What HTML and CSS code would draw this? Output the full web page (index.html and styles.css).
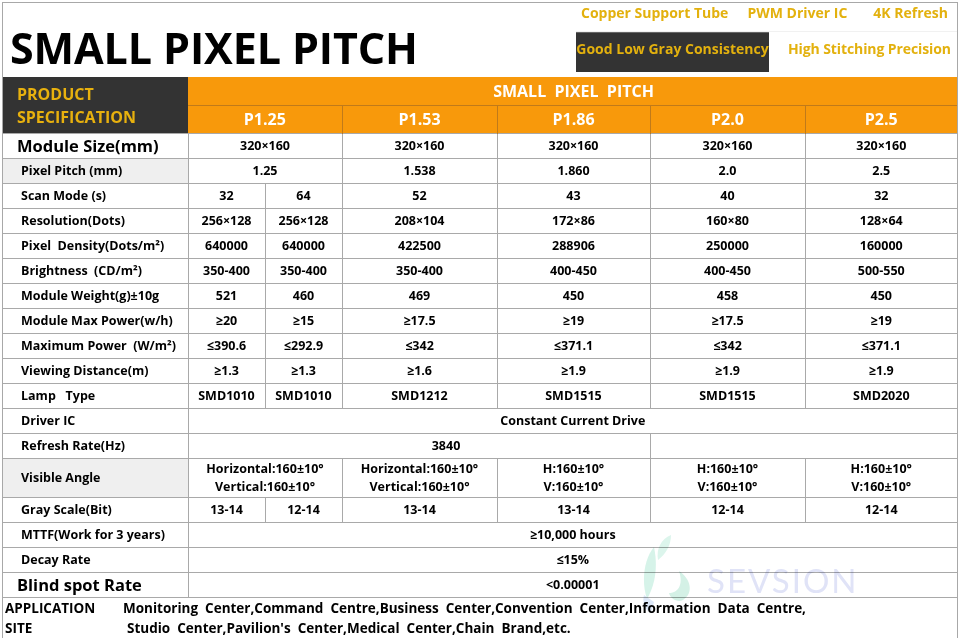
FILE: index.html
```html
<!DOCTYPE html>
<html lang="en">
<head>
<meta charset="utf-8">
<title>Small Pixel Pitch</title>
<link rel="stylesheet" href="styles.css">
</head>
<body>
<div class="page">
  <header class="top">
    <h1 class="title">SMALL PIXEL PITCH</h1>
    <div class="features">
      <div class="feat-row r1">
        <span class="f-copper">Copper Support Tube</span>
        <span class="f-pwm">PWM Driver IC</span>
        <span class="f-4k">4K Refresh</span>
      </div>
      <div class="feat-row r2">
        <span class="boxed">Good Low Gray Consistency</span>
        <span class="f-high">High Stitching Precision</span>
      </div>
    </div>
  </header>

  <table class="spec">
    <colgroup>
      <col class="c-lbl"><col class="c-a"><col class="c-a"><col class="c-2"><col class="c-3"><col class="c-4"><col class="c-5">
    </colgroup>
    <thead>
      <tr class="h1">
        <th rowspan="2" class="corner">PRODUCT<br>SPECIFICATION</th>
        <th colspan="6" class="series">SMALL&nbsp;&nbsp;PIXEL&nbsp;&nbsp;PITCH</th>
      </tr>
      <tr class="h2">
        <th colspan="2" class="first">P1.25</th><th>P1.53</th><th>P1.86</th><th>P2.0</th><th>P2.5</th>
      </tr>
    </thead>
    <tbody>
      <tr><td class="lbl big">Module Size(mm)</td><td colspan="2">320×160</td><td>320×160</td><td>320×160</td><td>320×160</td><td>320×160</td></tr>
      <tr><td class="lbl grey">Pixel Pitch (mm)</td><td colspan="2">1.25</td><td>1.538</td><td>1.860</td><td>2.0</td><td>2.5</td></tr>
      <tr><td class="lbl">Scan Mode (s)</td><td>32</td><td>64</td><td>52</td><td>43</td><td>40</td><td>32</td></tr>
      <tr><td class="lbl">Resolution(Dots)</td><td>256×128</td><td>256×128</td><td>208×104</td><td>172×86</td><td>160×80</td><td>128×64</td></tr>
      <tr><td class="lbl">Pixel  Density(Dots/m²)</td><td>640000</td><td>640000</td><td>422500</td><td>288906</td><td>250000</td><td>160000</td></tr>
      <tr><td class="lbl">Brightness  (CD/m²)</td><td>350-400</td><td>350-400</td><td>350-400</td><td>400-450</td><td>400-450</td><td>500-550</td></tr>
      <tr><td class="lbl">Module Weight(g)±10g</td><td>521</td><td>460</td><td>469</td><td>450</td><td>458</td><td>450</td></tr>
      <tr><td class="lbl">Module Max Power(w/h)</td><td>≥20</td><td>≥15</td><td>≥17.5</td><td>≥19</td><td>≥17.5</td><td>≥19</td></tr>
      <tr><td class="lbl">Maximum Power  (W/m²)</td><td>≤390.6</td><td>≤292.9</td><td>≤342</td><td>≤371.1</td><td>≤342</td><td>≤371.1</td></tr>
      <tr><td class="lbl">Viewing Distance(m)</td><td>≥1.3</td><td>≥1.3</td><td>≥1.6</td><td>≥1.9</td><td>≥1.9</td><td>≥1.9</td></tr>
      <tr><td class="lbl">Lamp   Type</td><td>SMD1010</td><td>SMD1010</td><td>SMD1212</td><td>SMD1515</td><td>SMD1515</td><td>SMD2020</td></tr>
      <tr><td class="lbl">Driver IC</td><td colspan="6">Constant Current Drive</td></tr>
      <tr><td class="lbl">Refresh Rate(Hz)</td><td colspan="4" class="refresh">3840</td><td colspan="2"></td></tr>
      <tr class="tall"><td class="lbl grey">Visible Angle</td><td colspan="2">Horizontal:160±10°<br>Vertical:160±10°</td><td>Horizontal:160±10°<br>Vertical:160±10°</td><td>H:160±10°<br>V:160±10°</td><td>H:160±10°<br>V:160±10°</td><td>H:160±10°<br>V:160±10°</td></tr>
      <tr><td class="lbl">Gray Scale(Bit)</td><td>13-14</td><td>12-14</td><td>13-14</td><td>13-14</td><td>12-14</td><td>12-14</td></tr>
      <tr><td class="lbl">MTTF(Work for 3 years)</td><td colspan="6">≥10,000 hours</td></tr>
      <tr><td class="lbl">Decay Rate</td><td colspan="6">≤15%</td></tr>
      <tr class="blind"><td class="lbl big">Blind spot Rate</td><td colspan="6">&lt;0.00001</td></tr>
    </tbody>
  </table>

  <div class="app">
    <div class="app-line"><span class="app-lbl">APPLICATION</span><span class="app-txt">Monitoring  Center,Command  Centre,Business  Center,Convention  Center,Information  Data  Centre,</span></div>
    <div class="app-line"><span class="app-lbl">SITE</span><span class="app-txt second">Studio  Center,Pavilion's  Center,Medical  Center,Chain  Brand,etc.</span></div>
  </div>

  <div class="watermark" aria-hidden="true">
    <svg class="wm-leaf" width="56" height="84" viewBox="0 0 56 84">
      <path d="M15 16 C5 28 2 50 8 68 C14 58 20 40 15 16 Z" fill="#d6f3e9"/>
      <path d="M32 4 C22 8 17 18 19 29 C27 23 32 14 32 4 Z" fill="#dcf5ec"/>
      <path d="M40 40 C52 48 55 62 44 69 C38 72 31 67 30 62 C38 62 45 55 40 40 Z" fill="#d4f1e6"/>
      <path d="M5 64 L15 71 L12 82 C6 79 3 71 5 64 Z" fill="#dde8f8"/>
    </svg>
    <span class="wm-text">SEVSION</span>
  </div>
</div>
</body>
</html>
```

FILE: styles.css
```css
* { box-sizing: border-box; }

body {
  margin: 0;
  background: #ffffff;
  font-family: "Open Sans", "DejaVu Sans", sans-serif;
  color: #000;
}

.page {
  position: relative;
  width: 956px;
  height: 636px;
  margin: 2px 0 0 2px;
  border-left: 1px solid #a8a8a8;
  border-top: 1px solid #a8a8a8;
  border-right: 1px solid #a8a8a8;
  overflow: hidden;
}

/* ---------- top header ---------- */
.top {
  display: flex;
  height: 74px;
}

.title {
  margin: 0;
  padding: 17px 0 0 7px;
  font-size: 43px;
  font-weight: 700;
  line-height: 56px;
  letter-spacing: -0.1px;
  color: #000;
  white-space: nowrap;
}

.features {
  margin-left: auto;
  width: 381px;
  display: flex;
  flex-direction: column;
  color: #e3b10e;
  font-weight: 700;
  font-size: 14px;
  white-space: nowrap;
}

.feat-row { display: flex; }

.r1 {
  height: 29px;
  line-height: 19px;
  border-bottom: 1px solid #f1f1f1;
}
.f-copper { margin-left: 5px; }
.f-pwm { margin-left: 19px; }
.f-4k { margin-left: 26px; }

.r2 {
  height: 40px;
  line-height: 19px;
}
.boxed {
  display: block;
  width: 193px;
  height: 40px;
  padding-top: 6px;
  text-align: center;
  background: #333333;
  border-top: 1px solid #666;
  font-size: 14px;
}
.f-high {
  margin-left: 19px;
  padding-top: 7px;
  letter-spacing: -0.1px;
}

/* ---------- spec table ---------- */
.spec {
  width: 954px;
  border-collapse: collapse;
  table-layout: fixed;
}

.c-lbl { width: 185px; }
.c-a { width: 77px; }
.c-2 { width: 155px; }
.c-3 { width: 153px; }
.c-4 { width: 155px; }
.c-5 { width: 152px; }

.spec th {
  font-weight: 700;
  padding: 0;
}

.spec th.corner {
  background: #333333;
  color: #e8b10e;
  font-size: 16px;
  line-height: 23px;
  text-align: left;
  padding: 3px 0 0 14px;
  vertical-align: middle;
}

.spec th.series {
  background: #f8990b;
  color: #fff;
  font-size: 16px;
  height: 28px;
  text-align: center;
  padding-left: 2px;
}

.h2 th {
  background: #f8990b;
  color: #fff;
  font-size: 16px;
  height: 28px;
  border-top: 1px solid #c07a1a;
  border-left: 1px solid #c07a1a;
}
.h2 th.first { border-left: none; }

.spec td {
  height: 25px;
  padding: 0;
  border: 1px solid #a9a9a9;
  text-align: center;
  vertical-align: middle;
  font-size: 12.5px;
  font-weight: 700;
  line-height: 18px;
  white-space: pre;
}
.spec tr td:first-child { border-left: none; }
.spec tr td:last-child { border-right: none; }

.spec td.lbl {
  text-align: left;
  padding-left: 18px;
}
.spec td.lbl.big {
  font-size: 16.5px;
  padding-left: 14px;
}
.spec td.grey { background: #efefef; }
.spec td.refresh { padding-left: 54px; }

.spec tr.tall td { height: 39px; }
.spec tr.blind td { height: 25px; }

/* ---------- application ---------- */
.app {
  padding: 0 0 0 2px;
  font-size: 13.5px;
  font-weight: 700;
  line-height: 20px;
}
.app-line { display: flex; white-space: pre; }
.app-lbl { width: 118px; }
.app-txt.second { padding-left: 4px; }

/* ---------- watermark ---------- */
.watermark {
  position: absolute;
  left: 636px;
  top: 528px;
  display: flex;
  align-items: flex-start;
  pointer-events: none;
  mix-blend-mode: multiply;
}
.wm-text {
  margin: 38px 0 0 12px;
  font-family: "Lato", "Open Sans", sans-serif;
  font-size: 33px;
  font-weight: 400;
  letter-spacing: 2px;
  color: #e0e3f7;
  line-height: 22px;
}
```
